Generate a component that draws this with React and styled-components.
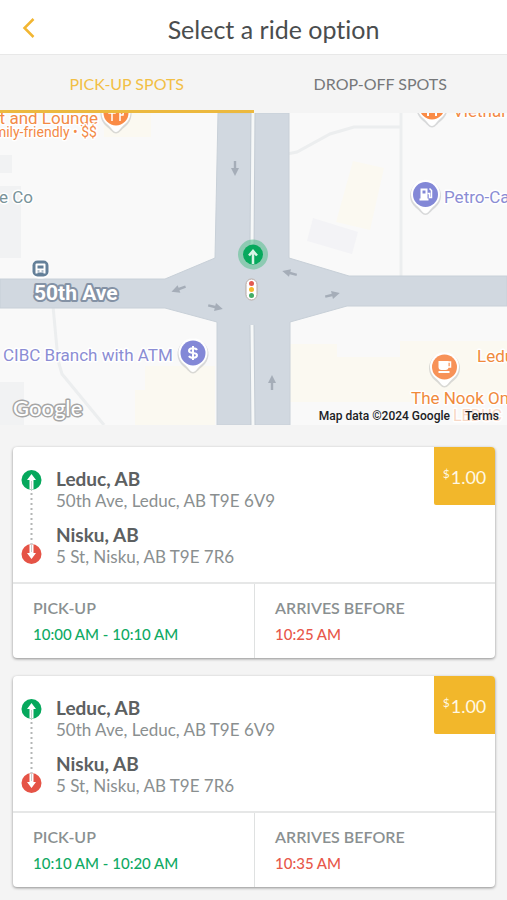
import React, { useState } from "react";
import styled, { createGlobalStyle } from "styled-components";

const GlobalStyle = createGlobalStyle`
  * { box-sizing: border-box; }
  body {
    margin: 0;
    background: #f4f4f4;
    color: #4a4d4e;
    font-family: Lato, "Liberation Sans", sans-serif;
    font-variant-ligatures: none;
  }
`;

const Screen = styled.div`
  display: flex;
  flex-direction: column;
`;

const Header = styled.header`
  display: flex;
  align-items: center;
  height: 55px;
  padding-left: 8px;
  background: #fff;
  border-bottom: 1px solid #e8e8e8;
`;

const BackButton = styled.button`
  display: flex;
  align-items: center;
  justify-content: center;
  width: 32px;
  height: 40px;
  padding: 2px 0 0 10px;
  border: 0;
  background: none;
  cursor: pointer;
`;

const Title = styled.h1`
  flex: 1;
  margin: 0;
  padding-top: 3px;
  font-size: 25px;
  line-height: 32px;
  font-weight: 400;
  text-align: center;
  color: #4a4d4e;
`;

const TabBar = styled.div`
  display: grid;
  grid-template-columns: 1fr 1fr;
  height: 58px;
`;

const Tab = styled.button`
  padding: 3px 0 0;
  border: 0;
  border-bottom: 3px solid ${(p) => (p.$active ? "#ecb93f" : "transparent")};
  background: none;
  font: 400 16px/20px Lato, "Liberation Sans", sans-serif;
  color: ${(p) => (p.$active ? "#f2bf45" : "#76787a")};
  cursor: pointer;
`;

const MapArea = styled.section`
  position: relative;
  height: 312px;
  overflow: hidden;
  background: #f8f8f8;
`;

const MapDrawing = styled.svg`
  display: block;
  width: 100%;
  height: 100%;
`;

const MapLabel = styled.text`
  font-family: Roboto, "Liberation Sans", sans-serif;
  font-size: ${(p) => p.$size || 17}px;
  font-weight: ${(p) => p.$weight || 400};
  fill: ${(p) => p.$color};
  stroke: ${(p) => p.$halo || "#fff"};
  stroke-width: ${(p) => (p.$halo ? 4 : 3)}px;
  stroke-linejoin: round;
  paint-order: stroke;
`;

const Attribution = styled.div`
  position: absolute;
  right: 8px;
  bottom: 1px;
  display: flex;
  gap: 15px;
  font: 500 12px/16px Roboto, "Liberation Sans", sans-serif;
  color: #202124;
`;

const TermsLink = styled.a`
  color: inherit;
  text-decoration: none;
`;

const RideList = styled.main`
  display: flex;
  flex-direction: column;
  gap: 18px;
  padding: 22px 12px 12px 13px;
`;

const Card = styled.article`
  overflow: hidden;
  border-radius: 4px;
  background: #fff;
  box-shadow: 0 1px 3px rgba(0, 0, 0, 0.42);
`;

const Route = styled.div`
  display: flex;
  align-items: flex-start;
  height: 137px;
  border-bottom: 2px solid #e6e7e7;
`;

const RouteMarks = styled.svg`
  flex: none;
  margin: 22px 14px 0 8px;
`;

const Stops = styled.div`
  display: flex;
  flex: 1;
  flex-direction: column;
  gap: 12px;
  padding-top: 21px;
`;

const Place = styled.h2`
  margin: 0;
  font-size: 19px;
  line-height: 22px;
  font-weight: 700;
  color: #5c6061;
`;

const Address = styled.p`
  margin: 0;
  font-size: 17px;
  line-height: 22px;
  color: #8a8f90;
`;

const Price = styled.div`
  display: flex;
  align-items: center;
  justify-content: center;
  gap: 1px;
  width: 61px;
  height: 58px;
  padding-top: 2px;
  border-bottom-left-radius: 2px;
  background: #f2b72b;
  font-size: 18px;
  line-height: 22px;
  color: #fff8e4;
`;

const Currency = styled.span`
  align-self: flex-start;
  padding-top: 16px;
  font-size: 12px;
  line-height: 18px;
`;

const Times = styled.dl`
  display: grid;
  grid-template-columns: 1fr 1fr;
  margin: 0;
`;

const TimeCell = styled.div`
  padding: 13px 0 13px 20px;
  border-left: ${(p) => (p.$divided ? "1px solid #dfe1e1" : "0")};
`;

const TimeLabel = styled.dt`
  font-size: 16px;
  line-height: 22px;
  font-weight: 600;
  color: #8a9091;
`;

const TimeValue = styled.dd`
  margin: 4px 0 0;
  font-size: 15px;
  line-height: 22px;
  font-weight: 500;
  color: ${(p) => (p.$late ? "#e8584b" : "#10aa64")};
`;

function Pin({ x, y, color, children }) {
  return (
    <g transform={`translate(${x} ${y})`}>
      <path
        d="M0 20.500C-3 20.500-5 17-10 13A15.500 15.500 0 1 1 10 13C5 17 3 20.500 0 20.500Z"
        fill="#9a9da0"
        opacity=".35"
      />
      <path
        d="M0 19C-3 19-4 15-9 11A14.500 14.500 0 1 1 9 11C4 15 3 19 0 19Z"
        fill="#fff"
      />
      <circle r="12.500" fill={color} />
      {children}
    </g>
  );
}

function LaneArrow({ x, y, angle }) {
  return (
    <path
      transform={`translate(${x} ${y}) rotate(${angle})`}
      d="M-7-1.200H0V-4L8 0L0 4V1.200H-7Z"
      fill="#a5adb8"
    />
  );
}

function StreetMap() {
  return (
    <MapDrawing
      viewBox="0 113 507 312"
      preserveAspectRatio="xMidYMid slice"
      role="img"
      aria-label="Map of 50th Ave, Leduc"
    >
      <rect y="113" width="507" height="312" fill="#f9f9f9" />
      <g fill="#f1f2f3">
        <path d="M0 155H12V173H0ZM0 186H21V258H0ZM0 382H24V425H0Z" />
        <path d="M313 218L358 232L352 254L307 241Z" fill="#f3f3f6" />
      </g>
      <g fill="#fbf9f1">
        <path d="M104 113H151V137H104ZM353 161L384 168L370 230L336 222Z" />
        <path d="M145 366H215V425H135V390H145ZM290 344H337V357H400V341H507V402H290Z" />
      </g>
      <g fill="none" stroke="#eceeef" strokeWidth="3">
        <path d="M287 154L297 152L330 134L354 127L401 127" />
        <path d="M401 113V278" />
        <path d="M53 306L58 360L62 374L104 425" />
      </g>

      <path
        d="M218 113H289V258L349 276H507V306H347L290 322V425H217V322L165 308H0V279H165L215 258Z"
        fill="#d1d8e0"
        stroke="#c8d0d8"
      />
      <path d="M253 113L252 248M252 325L253 425" stroke="#c3cbd3" strokeWidth="5" />
      <path d="M253 113L252 248M252 325L253 425" stroke="#f6f8f8" strokeWidth="3" />
      <LaneArrow x={235} y={168} angle={90} />
      <LaneArrow x={272} y={383} angle={-90} />
      <LaneArrow x={179} y={289} angle={160} />
      <LaneArrow x={215} y={307} angle={14} />
      <LaneArrow x={290} y={273} angle={195} />
      <LaneArrow x={332} y={295} angle={-14} />

      <rect x="246" y="279" width="11" height="21" rx="5.500" fill="#fff" stroke="#b8aaa4" />
      <circle cx="251.500" cy="283.500" r="2.500" fill="#e25a50" />
      <circle cx="251.500" cy="289.500" r="2.500" fill="#f5b92e" />
      <circle cx="251.500" cy="295.500" r="2.500" fill="#43ad67" />

      <circle cx="253" cy="254.500" r="15" fill="#68c39a" opacity=".65" />
      <circle cx="253" cy="254.500" r="10" fill="#07a95d" />
      <path d="M253 264V251M249 255.500L253 251L257 255.500" fill="none" stroke="#d8f5e6" strokeWidth="2.500" />

      <MapLabel x="98" y="124" textAnchor="end" $size={17} $color="#f38a46">t and Lounge</MapLabel>
      <MapLabel x="97" y="137" textAnchor="end" $size={14} $color="#f38a46">mily-friendly • $$</MapLabel>
      <MapLabel x="33" y="203" textAnchor="end" $size={17} $color="#79939a">e Co</MapLabel>
      <MapLabel x="453" y="117" $size={17} $color="#f38a46">Vietnamese</MapLabel>
      <MapLabel x="444" y="203" $size={17} $color="#8b8dd4">Petro-Canada</MapLabel>
      <MapLabel x="3" y="361" $size={17} $color="#8b8dd4">CIBC Branch with ATM</MapLabel>
      <MapLabel x="34" y="300" $size={21} $weight={700} $color="#fff" $halo="#8492a5">50th Ave</MapLabel>
      <MapLabel x="477" y="362" $size={17} $color="#f08a3c">Leduc</MapLabel>
      <MapLabel x="453" y="421" $size={16} $color="#f7d7c5">LEDUC</MapLabel>
      <MapLabel x="411" y="404" $size={17} $color="#f08a3c">The Nook On Main</MapLabel>

      <Pin x={116} y={113} color="#fa8b46">
        <path d="M-4-7V8M-7-7V0H-1V-7M4 8V-7Q8-5 7 2H4" fill="none" stroke="#fff" strokeWidth="1.500" />
      </Pin>
      <Pin x={432} y={107} color="#fa8b46">
        <path d="M-4-7V9M4-7V9" stroke="#fff" strokeWidth="2" />
      </Pin>
      <Pin x={425.500} y={194.500} color="#8388d7">
        <path d="M-5-6H2V5H-5ZM-6 4H3V6H-6Z" fill="#fff" />
        <path d="M-3-4H0V-1H-3Z" fill="#8388d7" />
        <path d="M2-1H4V3H6V-4L4-6" fill="none" stroke="#fff" strokeWidth="1.500" />
      </Pin>
      <Pin x={193} y={353} color="#8388d7">
        <path d="M4-3C3-5-4-6-4-2C-4 1 4-1 4 2C4 6-3 5-4 3M0-7V7" fill="none" stroke="#fff" strokeWidth="2" />
      </Pin>
      <Pin x={444.500} y={367} color="#f79258">
        <path d="M-6-6H4V0Q4 3 1 3H-3Q-6 3-6 0ZM-6 4H5V6H-6Z" fill="#fff" />
        <path d="M3-5H6V0H3" fill="none" stroke="#fff" strokeWidth="1.500" />
      </Pin>

      <g transform="translate(40.500 268.500)">
        <rect x="-9" y="-9" width="18" height="19" rx="7" fill="#fff" />
        <rect x="-8" y="-8" width="16" height="16" rx="5" fill="#637f98" />
        <path d="M-5-4Q-5-5-4-5H4Q5-5 5-4V5H3V4H-3V5H-5Z" fill="#fff" />
        <path d="M-3-3H3V0H-3ZM-3 2H-1V3H-3ZM1 2H3V3H1Z" fill="#637f98" />
      </g>
      <text
        x="13"
        y="416"
        fill="#fff"
        stroke="#a6a6a6"
        strokeWidth="3"
        strokeLinejoin="round"
        paintOrder="stroke"
        fontFamily="Lato, sans-serif"
        fontSize="22"
        fontWeight="500"
      >
        Google
      </text>
    </MapDrawing>
  );
}

function RouteIcons() {
  return (
    <RouteMarks width="21" height="96" viewBox="0 0 21 96" aria-hidden="true">
      <path d="M10.500 24V75" stroke="#b4b6b6" strokeWidth="2" strokeDasharray="2 3" />
      <circle cx="10.500" cy="11" r="10" fill="#05a85c" />
      <path d="M8.500 20.500V11H6L10.500 5L15 11H12.500V20.500Z" fill="#fff" />
      <circle cx="10.500" cy="85" r="10" fill="#e55346" />
      <path d="M8.500 75.500V84H6L10.500 90L15 84H12.500V75.500Z" fill="#fff" />
      <path d="M10.500 12V22M10.500 74V83" stroke="#c9cccc" strokeWidth="1" />
    </RouteMarks>
  );
}

function RideCard({ ride }) {
  return (
    <Card>
      <Route>
        <RouteIcons />
        <Stops>
          {ride.stops.map((stop) => (
            <div key={stop.place}>
              <Place>{stop.place}</Place>
              <Address>{stop.address}</Address>
            </div>
          ))}
        </Stops>
        <Price>
          <Currency>$</Currency>
          {ride.price}
        </Price>
      </Route>
      <Times>
        <TimeCell>
          <TimeLabel>PICK-UP</TimeLabel>
          <TimeValue>{ride.pickup}</TimeValue>
        </TimeCell>
        <TimeCell $divided>
          <TimeLabel>ARRIVES BEFORE</TimeLabel>
          <TimeValue $late>{ride.arrival}</TimeValue>
        </TimeCell>
      </Times>
    </Card>
  );
}

const stops = [
  { place: "Leduc, AB", address: "50th Ave, Leduc, AB T9E 6V9" },
  { place: "Nisku, AB", address: "5 St, Nisku, AB T9E 7R6" },
];

const rides = [
  { stops, price: "1.00", pickup: "10:00 AM - 10:10 AM", arrival: "10:25 AM" },
  { stops, price: "1.00", pickup: "10:10 AM - 10:20 AM", arrival: "10:35 AM" },
];

const tabs = ["PICK-UP SPOTS", "DROP-OFF SPOTS"];

export default function App() {
  const [active, setActive] = useState(0);
  return (
    <Screen>
      <GlobalStyle />
      <Header>
        <BackButton aria-label="Back">
          <svg width="16" height="24" viewBox="0 0 16 24" fill="none" stroke="#f2b632" strokeWidth="2.500">
            <path d="M12.500 3L3.500 12L12.500 21" />
          </svg>
        </BackButton>
        <Title>Select a ride option</Title>
      </Header>
      <TabBar role="tablist">
        {tabs.map((name, i) => (
          <Tab key={name} role="tab" aria-selected={i === active} $active={i === active} onClick={() => setActive(i)}>
            {name}
          </Tab>
        ))}
      </TabBar>
      <MapArea>
        <StreetMap />
        <Attribution>
          <span>Map data ©2024 Google</span>
          <TermsLink href="#terms">Terms</TermsLink>
        </Attribution>
      </MapArea>
      <RideList>
        {rides.map((ride) => (
          <RideCard key={ride.pickup} ride={ride} />
        ))}
      </RideList>
    </Screen>
  );
}
